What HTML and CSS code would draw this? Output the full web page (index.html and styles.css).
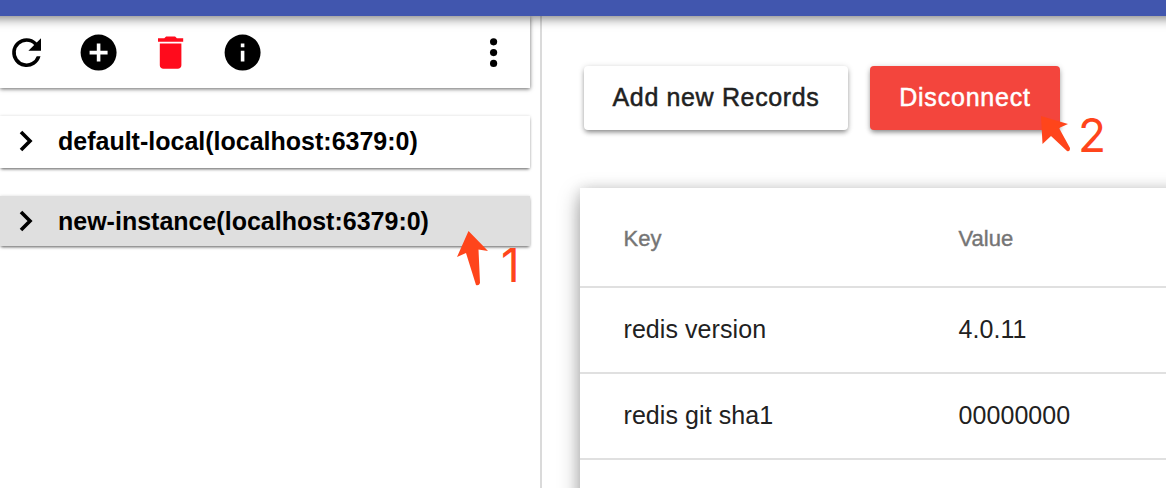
FILE: index.html
```html
<!DOCTYPE html>
<html lang="en">
<head>
<meta charset="utf-8">
<title>Redis instances</title>
<link rel="stylesheet" href="styles.css">
</head>
<body>
<div class="app">
  <header class="topbar"></header>
  <div class="content">
    <aside class="sidebar">
      <div class="toolbar">
        <svg class="icon" viewBox="0 0 24 24"><path d="M17.65 6.35A7.96 7.96 0 0 0 12 4a8 8 0 1 0 7.73 10h-2.08A6 6 0 1 1 12 6c1.66 0 3.14.69 4.22 1.78L13 11h7V4z"/></svg>
        <svg class="icon" viewBox="0 0 24 24"><path d="M12 2a10 10 0 1 0 0 20 10 10 0 0 0 0-20zm5 11h-4v4h-2v-4H7v-2h4V7h2v4h4z"/></svg>
        <svg class="icon icon-delete" viewBox="0 0 24 24"><path d="M6 19c0 1.100.9 2 2 2h8c1.100 0 2-.9 2-2V7H6zM19 4h-3.500l-1-1h-5l-1 1H5v2h14z"/></svg>
        <svg class="icon" viewBox="0 0 24 24"><path d="M12 2a10 10 0 1 0 0 20 10 10 0 0 0 0-20zm1 15h-2v-6h2zm0-8h-2V7h2z"/></svg>
        <svg class="icon icon-more" viewBox="0 0 24 24"><circle cx="12" cy="6" r="2"/><circle cx="12" cy="12" r="2"/><circle cx="12" cy="18" r="2"/></svg>
      </div>
      <div class="instance">
        <svg class="chevron" viewBox="0 0 14 22"><path d="M2 2l9 9-9 9"/></svg>
        <span class="instance-name">default-local(localhost:6379:0)</span>
      </div>
      <div class="instance selected">
        <svg class="chevron" viewBox="0 0 14 22"><path d="M2 2l9 9-9 9"/></svg>
        <span class="instance-name">new-instance(localhost:6379:0)</span>
      </div>
    </aside>
    <main class="main">
      <div class="actions">
        <button class="btn btn-add"><span>Add new Records</span></button>
        <button class="btn btn-warn"><span>Disconnect</span></button>
      </div>
      <div class="table">
        <div class="row head"><span class="th-key">Key</span><span class="th-value">Value</span></div>
        <div class="row"><span>redis version</span><span>4.0.11</span></div>
        <div class="row"><span>redis git sha1</span><span>00000000</span></div>
        <div class="row"></div>
      </div>
    </main>
  </div>
  <svg class="arrow arrow-one" viewBox="0 0 34 56"><path d="M12.500 0L32 20l-9.500-1.500L24 52q-1 3-4 2L10 22 1 26z"/></svg>
  <span class="mark mark-one">1</span>
  <svg class="arrow arrow-two" viewBox="0 0 32 38"><path d="M1 0l27 8-9 4 11 20q0 4-3 3L11 20 2.500 28z"/></svg>
  <span class="mark mark-two">2</span>
</div>
</body>
</html>
```
FILE: styles.css
```css
* { box-sizing: border-box; }
body { margin: 0; background: #fff; font-family: "Liberation Sans", Arial, sans-serif; }
.app { position: relative; display: flex; flex-direction: column; width: 1166px; height: 488px; overflow: hidden; }
.topbar { flex: none; height: 16px; margin: 0 -20px; background: #4156ae; box-shadow: 0 2px 12px rgba(0,0,0,.55); z-index: 1; }
.content { display: flex; flex: 1; min-height: 0; }
.sidebar { flex: none; width: 542px; padding-right: 10px; border-right: 2px solid #dadada; }
.toolbar { display: flex; align-items: center; gap: 28.800px; width: 530px; height: 72px; padding: 1px 14px 0 4.900px; background: #fff; box-shadow: 0 1px 4px rgba(0,0,0,.6); }
.icon { flex: none; width: 43.200px; height: 43.200px; fill: #000; }
.icon-delete { fill: #ff0b1c; }
.icon-more { margin-left: auto; margin-right: .6px; }
.instance { display: flex; align-items: center; gap: 25px; width: 530px; height: 52px; margin-top: 28px; padding: 0 0 2px 19px; background: #fff; box-shadow: 0 2px 3px -1px rgba(0,0,0,.6), 0 0 3px rgba(0,0,0,.14); }
.instance.selected { height: 50px; padding-bottom: 0; background: #dfdfdf; }
.chevron { flex: none; width: 14px; height: 22px; fill: none; stroke: #000; stroke-width: 3.600; }
.instance-name { font-size: 25px; font-weight: 700; line-height: 30px; white-space: nowrap; }
.main { flex: 1; min-width: 0; padding: 50px 0 0 38px; overflow: hidden; }
.actions { display: flex; gap: 22px; padding-left: 4px; }
.btn { height: 64px; border: 0; border-radius: 4px; padding: 0 0 2px; font: 25px/30px "Liberation Sans", Arial, sans-serif; color: #212121; background: #fff; -webkit-text-stroke: .5px currentColor; box-shadow: 0 3px 5px -1px rgba(0,0,0,.4), 0 1px 6px rgba(0,0,0,.16); }
.btn-add { width: 264px; letter-spacing: .64px; }
.btn-warn { width: 190px; background: #f3453d; color: #fff; letter-spacing: .8px; }
.table { width: 620px; height: 340px; margin-top: 58px; background: #fff; box-shadow: 0 8px 20px rgba(0,0,0,.36), 0 0 12px rgba(0,0,0,.1); }
.row { display: grid; grid-template-columns: 335px 1fr; align-items: center; height: 86px; padding: 0 0 2px 43.500px; border-bottom: 2px solid #e0e0e0; font-size: 25px; line-height: 30px; letter-spacing: .07px; color: #212121; }
.row.head { height: 100px; padding-top: 4px; padding-bottom: 0; font-size: 22px; letter-spacing: 0; color: #757575; -webkit-text-stroke: .4px currentColor; }
.arrow { position: absolute; fill: #ff451b; z-index: 2; }
.arrow-one { left: 456px; top: 231px; width: 34px; height: 56px; }
.arrow-two { left: 1040px; top: 116px; width: 32px; height: 38px; }
.mark { position: absolute; z-index: 2; font: 46px/56px Inter, sans-serif; color: #ff451b; }
.mark-one { left: 501px; top: 237px; }
.mark-two { left: 1078px; top: 107px; }
```
